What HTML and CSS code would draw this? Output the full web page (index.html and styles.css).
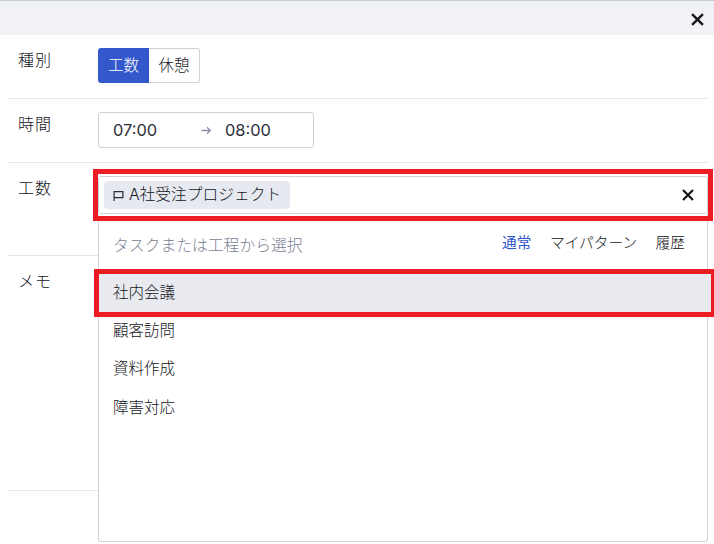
FILE: index.html
```html
<!DOCTYPE html>
<html lang="ja">
<head>
<meta charset="utf-8">
<title>工数</title>
<link rel="stylesheet" href="styles.css">
</head>
<body>
<div class="page">
  <header class="top">
    <svg class="close" viewBox="0 0 12 12"><path d="M1 1l10 10M11 1L1 11"/></svg>
  </header>
  <div class="form">
    <div class="row row-kind">
      <div class="label">種別</div>
      <div class="seg"><span class="seg-on">工数</span><span class="seg-off">休憩</span></div>
    </div>
    <div class="row row-time">
      <div class="label">時間</div>
      <div class="time">
        <span class="t-start">07:00</span>
        <svg class="arrow" viewBox="0 0 10 8"><path d="M0.5 4h8M5.5 1l3 3-3 3"/></svg>
        <span class="t-end">08:00</span>
      </div>
    </div>
    <div class="row row-work">
      <div class="label">工数</div>
    </div>
    <div class="row row-memo">
      <div class="label">メモ</div>
    </div>
  </div>
  <div class="picker">
    <div class="field">
      <span class="chip">
        <svg class="flag" viewBox="0 0 10 10"><path d="M1 10V1.5h8v5.5H1"/></svg>A社受注プロジェクト
      </span>
      <svg class="clear" viewBox="0 0 12 12"><path d="M1 1l10 10M11 1L1 11"/></svg>
    </div>
    <div class="drop">
      <div class="drop-head">
        <span class="hint">タスクまたは工程から選択</span>
        <nav class="tabs"><span class="tab-on">通常</span><span>マイパターン</span><span>履歴</span></nav>
      </div>
      <ul class="list">
        <li class="active">社内会議</li>
        <li>顧客訪問</li>
        <li>資料作成</li>
        <li>障害対応</li>
      </ul>
    </div>
  </div>
  <div class="mark mark-field"></div>
  <div class="mark mark-item"></div>
</div>
</body>
</html>
```
FILE: styles.css
```css
* { box-sizing: border-box; }
html, body { margin: 0; padding: 0; }
body {
  font-family: Inter, "Noto Sans CJK JP", sans-serif;
  font-weight: 300;
  color: #14151b;
  background: #fff;
}
.page { position: relative; width: 714px; height: 544px; overflow: hidden; }
.top {
  height: 35px;
  background: #f1f2f6;
  border-top: 1px solid #c8cad6;
  display: flex;
  justify-content: flex-end;
  align-items: center;
  padding: 0 10px 0 0;
}
.close { width: 13px; height: 13px; margin-top: 2px; }
.close path, .clear path { fill: none; stroke: #15161c; stroke-width: 2.2; }
.form { padding: 0 6px 0 8px; }
.row { display: flex; border-bottom: 1px solid #e6e7ea; }
.row-kind { height: 64px; padding-top: 13px; }
.row-time { height: 64px; padding-top: 13px; }
.row-work { height: 93px; padding-top: 13px; }
.row-memo { height: 235px; padding-top: 13px; }
.label { width: 90px; padding-left: 10px; font-size: 16px; line-height: 24px; letter-spacing: 1px; }
.seg { display: flex; height: 35px; font-size: 15.5px; }
.seg span { display: flex; align-items: center; justify-content: center; height: 35px; padding-bottom: 3px; }
.seg-on { width: 51px; background: #3358cc; color: #fff; border-radius: 3px 0 0 3px; }
.seg-off { width: 51px; border: 1px solid #cfd1da; border-left: 0; border-radius: 0 3px 3px 0; }
.time {
  width: 216px; height: 36px;
  border: 1px solid #cfd1da; border-radius: 3px;
  display: flex; align-items: center;
  font-size: 16.4px; font-weight: 400; color: #2b2d36;
  padding-left: 14px;
}
.t-start { width: 88px; }
.arrow { width: 11px; height: 9px; }
.arrow path { fill: none; stroke: #8e90aa; stroke-width: 1.2; }
.t-end { margin-left: 13px; }
.picker { position: absolute; left: 98px; top: 176px; width: 610px; }
.field {
  height: 38px;
  background: #fff;
  border: 1px solid #cfd1da;
  border-radius: 3px;
  display: flex; align-items: center; justify-content: space-between;
  padding: 0 14px 0 5px;
}
.chip {
  display: flex; align-items: center;
  height: 28px; padding: 0 9px 3px;
  background: #e6e9f0; border-radius: 4px;
  font-size: 15.75px;
}
.flag { width: 11px; height: 11px; margin-right: 5px; margin-top: 3px; }
.flag path { fill: none; stroke: #2b2d36; stroke-width: 1.1; }
.clear { width: 12px; height: 12px; margin-right: -1px; }
.drop {
  height: 328px;
  background: #fff;
  border: 1px solid #cfd1da;
  border-top: 0;
  border-radius: 0 0 3px 3px;
}
.drop-head {
  height: 60px;
  display: flex; justify-content: space-between; align-items: center;
  padding: 0 23px 0 14px;
}
.hint { font-size: 15.8px; color: #7c8094; }
.tabs { display: flex; gap: 18.5px; font-size: 14.7px; margin-top: -6px; margin-right: -1px; }
.tab-on { color: #3358cc; font-weight: 400; }
.list { list-style: none; margin: 0; padding: 0; font-size: 15.5px; }
.list li { height: 38.2px; line-height: 37px; padding-left: 14px; }
.list li.active { background: #e9eaef; margin-right: -4px; }
.mark { position: absolute; border: 5px solid #ed1c24; pointer-events: none; }
.mark-field { left: 93px; top: 169px; width: 620px; height: 52px; }
.mark-item { left: 94px; top: 269px; width: 622px; height: 48px; }
```
